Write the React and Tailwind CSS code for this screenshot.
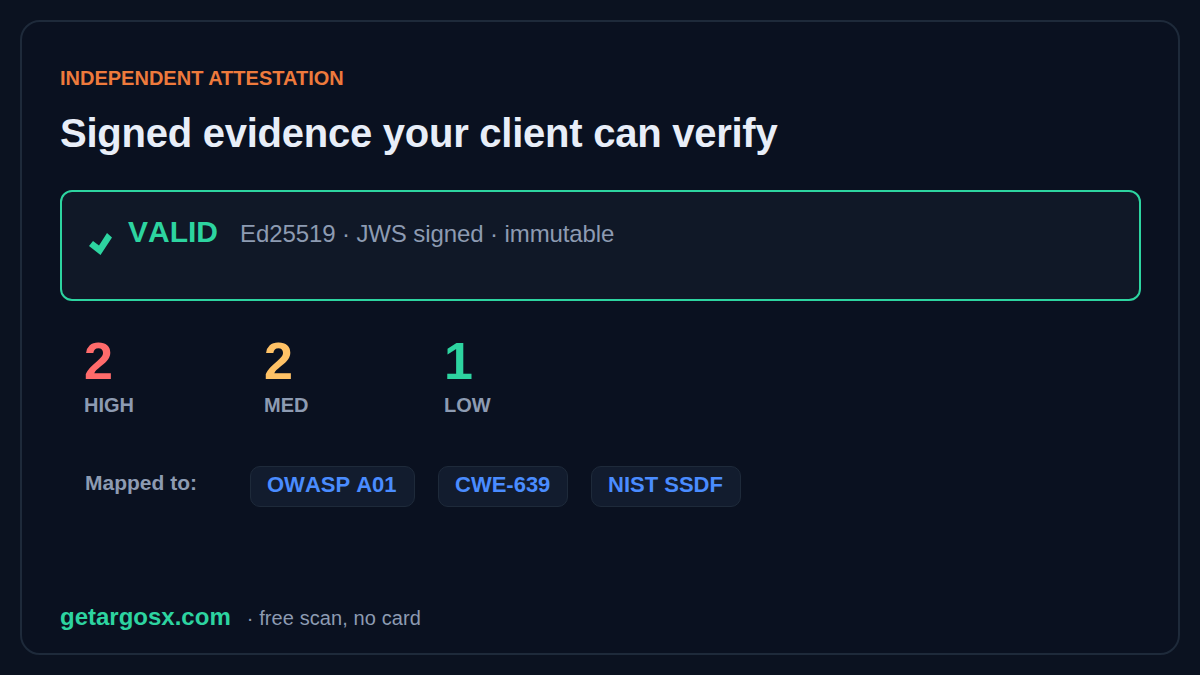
import React from "react";

const stats = [
  { value: "2", label: "HIGH", color: "text-[#ff6b6b]" },
  { value: "2", label: "MED", color: "text-[#ffc266]" },
  { value: "1", label: "LOW", color: "text-[#2dd4a0]" },
];

const tags = [
  { text: "OWASP A01", width: "w-[165px]" },
  { text: "CWE-639", width: "w-[130px]" },
  { text: "NIST SSDF", width: "w-[150px]" },
];

const App = () => {
  return (
    <div className="w-[1200px] h-[675px] overflow-hidden bg-[#0b1220] p-5 font-['Liberation_Sans',Arial,sans-serif] [font-kerning:none]">
      <div className="flex flex-col h-full rounded-[20px] border-2 border-[#1e2a3a] bg-[#0a1120] pl-[38px] pr-[37px] pt-[44px]">
        {/* Header */}
        <div className="text-[20px] leading-[24px] font-bold text-[#ee7a3c] [font-kerning:normal]">INDEPENDENT ATTESTATION</div>
        <h1 className="mt-[20px] text-[40px] leading-[46px] font-bold tracking-[-0.25px] text-[#e8eef8]">
          Signed evidence your client can verify
        </h1>

        {/* Verdict box */}
        <div className="mt-[34px] flex h-[111px] rounded-[12px] border-2 border-[#2dd4a0] bg-[#101827] pl-[27px] pt-[23px]">
          <svg className="mt-[18px] shrink-0" width="24" height="22" viewBox="0 0 24 22">
            <polygon points="0,13 4,8 10,12.5 18,0 23,4.5 11.5,22" fill="#2dd4a0" />
          </svg>
          <span className="ml-[15px] text-[30px] leading-[34px] font-bold text-[#2dd4a0]">VALID</span>
          <span className="ml-[22px] mt-[2px] text-[24px] leading-[34px] tracking-[-0.1px] text-[#8d9bb2]">Ed25519 · JWS signed · immutable</span>
        </div>

        {/* Counts */}
        <div className="mt-[30px] flex pl-[24px]">
          {stats.map((s) => (
            <div key={s.label} className="w-[180px]">
              <div className={`text-[52px] leading-[60px] font-bold ${s.color}`}>{s.value}</div>
              <div className="mt-[2px] text-[20px] leading-[24px] font-bold text-[#8d9bb2]">{s.label}</div>
            </div>
          ))}
        </div>

        {/* Mappings */}
        <div className="mt-[49px] flex items-start pl-[25px]">
          <span className="mt-[4px] w-[165px] text-[21px] leading-[26px] font-bold text-[#8d9bb2]">Mapped to:</span>
          <div className="flex gap-[23px]">
            {tags.map((t) => (
              <span key={t.text} className={`h-[41px] ${t.width} rounded-[10px] border border-[#1e2a3a] bg-[#121c2e] pl-4 text-[22px] leading-[35px] font-bold text-[#4a8cff]`}>
                {t.text}
              </span>
            ))}
          </div>
        </div>

        {/* Footer */}
        <div className="mt-auto mb-[22px] flex items-baseline">
          <span className="text-[24px] leading-[26px] font-bold text-[#2dd4a0]">getargosx.com</span>
          <span className="ml-[16px] text-[20px] leading-[26px] tracking-[0.1px] text-[#8d9bb2]">· free scan, no card</span>
        </div>
      </div>
    </div>
  );
};

export default App;
